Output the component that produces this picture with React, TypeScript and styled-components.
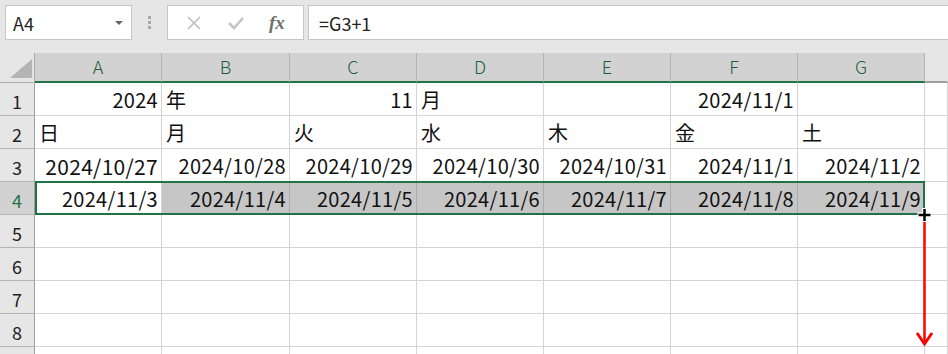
import React from 'react';
import styled, { createGlobalStyle } from 'styled-components';

const Global = createGlobalStyle`
body {
    margin: 0;
    background: #ffffff;
    font-family: "Noto Sans CJK JP", "Noto Sans", sans-serif;
}
`;

const Page = styled.div`
width: 948px;
height: 354px;
overflow: hidden;
background: #e6e6e6;
`;

const Toolbar = styled.div`
display: flex;
align-items: center;
height: 53px;
padding: 0 0 8px 5px;
box-sizing: border-box;
`;

const NameBox = styled.div`
display: flex;
align-items: center;
justify-content: space-between;
width: 127px;
height: 35px;
box-sizing: border-box;
background: #fff;
border: 1px solid #c6c6c6;
padding: 0 8px 0 7px;
font-size: 18px;
color: #222;
`;

const Caret = styled.span`
width: 0;
height: 0;
border-left: 4px solid transparent;
border-right: 4px solid transparent;
border-top: 4px solid #666;
`;

const Dots = styled.div`
display: flex;
flex-direction: column;
gap: 2px;
margin: 0 16px 0 16px;
span {
    width: 3px;
    height: 3px;
    background: #a8a8a8;
}
`;

const IconBox = styled.div`
display: flex;
align-items: center;
justify-content: space-around;
width: 137px;
height: 35px;
box-sizing: border-box;
background: #fff;
border: 1px solid #c6c6c6;
padding: 0 6px;
`;

const Fx = styled.span`
font-family: "Liberation Serif", serif;
font-style: italic;
font-weight: bold;
font-size: 19px;
color: #707070;
`;

const FormulaBox = styled.div`
flex: 1;
display: flex;
align-items: center;
height: 35px;
margin-left: 4px;
box-sizing: border-box;
background: #fff;
border: 1px solid #c6c6c6;
border-right: none;
padding-left: 10px;
font-size: 18px;
color: #222;
`;

const Sheet = styled.div`
position: relative;
display: grid;
grid-template-columns: 35px 127px 128px 127px 127px 127px 127px 127px 1fr;
grid-template-rows: 30px repeat(9, 33px);
background: #fff;
`;

const Corner = styled.div`
background: #e6e6e6;
border-right: 1px solid #ababab;
border-bottom: 1px solid #ababab;
box-sizing: border-box;
`;

const ColHead = styled.div<{ $sel?: boolean }>`
display: flex;
align-items: center;
justify-content: center;
box-sizing: border-box;
background: ${p => p.$sel ? '#d2d2d2' : '#e6e6e6'};
border-right: 1px solid ${p => p.$sel ? '#b4b4b4' : '#e6e6e6'};
border-bottom: ${p => p.$sel ? '2px solid #217346' : '2px solid #a0a0a0'};
color: #1f5e3a;
font-size: 18px;
font-weight: 300;
padding-bottom: 2px;
`;

const RowHead = styled.div<{ $sel?: boolean }>`
display: flex;
align-items: center;
justify-content: center;
box-sizing: border-box;
background: ${p => p.$sel ? '#d2d2d2' : '#e6e6e6'};
border-right: 1px solid #a0a0a0;
border-bottom: 1px solid #b4b4b4;
color: ${p => p.$sel ? '#217346' : '#222'};
font-size: 18px;
padding-top: 3px;
`;

const Cell = styled.div<{ $align?: 'left' | 'right'; $fill?: boolean; $big?: boolean }>`
display: flex;
align-items: center;
justify-content: ${p => p.$align === 'left' ? 'flex-start' : 'flex-end'};
box-sizing: border-box;
background: ${p => p.$fill ? '#c6c6c6' : '#fff'};
border-right: 1px solid ${p => p.$fill ? '#ababab' : '#d4d4d4'};
border-bottom: 1px solid #d4d4d4;
padding: 1px 3px 0 4px;
font-size: ${p => p.$big ? '21px' : '20px'};
letter-spacing: 0.3px;
color: #111;
white-space: nowrap;
`;

const Selection = styled.div`
position: absolute;
left: 35px;
top: 128px;
width: 890px;
height: 34px;
box-sizing: border-box;
border: 2px solid #217346;
pointer-events: none;
`;

const Overlay = styled.svg`
position: absolute;
left: 0;
top: 0;
pointer-events: none;
`;

type Val = { t: string; a?: 'left' | 'right'; big?: boolean };

const rows: Val[][] = [
    [{ t: '2024' }, { t: '年', a: 'left' }, { t: '11' }, { t: '月', a: 'left' }, { t: '' }, { t: '2024/11/1' }, { t: '' }],
    ['日', '月', '火', '水', '木', '金', '土'].map(d => ({ t: d, a: 'left' as const })),
    [{ t: '2024/10/27', big: true }, { t: '2024/10/28' }, { t: '2024/10/29' }, { t: '2024/10/30' }, { t: '2024/10/31' }, { t: '2024/11/1' }, { t: '2024/11/2' }],
    [{ t: '2024/11/3' }, { t: '2024/11/4' }, { t: '2024/11/5' }, { t: '2024/11/6' }, { t: '2024/11/7' }, { t: '2024/11/8' }, { t: '2024/11/9' }],
];

const cols = ['A', 'B', 'C', 'D', 'E', 'F', 'G'];

const App: React.FC = () => {
    const cells: React.ReactNode[] = [];
    for (let r = 0; r < 9; r++) {
        const sel = r === 3;
        // row 9 only peeks in at the bottom edge, its number is below the fold
        cells.push(<RowHead key={'h' + r} $sel={sel}>{r < 8 ? r + 1 : ''}</RowHead>);
        for (let c = 0; c < 7; c++) {
            const v = rows[r] ? rows[r][c] : { t: '' };
            cells.push(
                <Cell key={r + '-' + c} $align={v.a} $big={v.big} $fill={sel && c > 0}>{v.t}</Cell>
            );
        }
        cells.push(<Cell key={'x' + r} />);
    }

    return (
        <Page>
            <Global />
            <Toolbar>
                <NameBox>A4<Caret /></NameBox>
                <Dots><span /><span /><span /></Dots>
                <IconBox>
                    <svg width="16" height="16" viewBox="0 0 16 16">
                        <path d="M2 2 L14 14 M14 2 L2 14" stroke="#bdbdbd" strokeWidth="1.6" />
                    </svg>
                    <svg width="18" height="16" viewBox="0 0 18 16">
                        <path d="M2 8 L7 13 L16 3" stroke="#c4c4c4" strokeWidth="2.6" fill="none" />
                    </svg>
                    <Fx>fx</Fx>
                </IconBox>
                <FormulaBox>=G3+1</FormulaBox>
            </Toolbar>
            <Sheet>
                <Corner>
                    <svg width="35" height="29" viewBox="0 0 35 29" style={{ display: 'block' }}>
                        <polygon points="32,6 32,25 10,25" fill="#b4b4b4" />
                    </svg>
                </Corner>
                {cols.map(c => <ColHead key={c} $sel>{c}</ColHead>)}
                <ColHead />
                {cells}
                <Selection />
                <Overlay width="948" height="301" viewBox="0 53 948 301">
                    <line x1="924.5" y1="218" x2="924.5" y2="343" stroke="#ff0000" strokeWidth="2.5" />
                    <path d="M917 333 L924.5 344 L932 333" stroke="#ff0000" strokeWidth="2.8" fill="none" />
                    <path d="M924.5 208 V222 M917.5 215 H931.5" stroke="#fff" strokeWidth="5" />
                    <path d="M924.5 209 V221 M918.5 215 H930.5" stroke="#000" strokeWidth="2.5" />
                </Overlay>
            </Sheet>
        </Page>
    );
};

export default App;
